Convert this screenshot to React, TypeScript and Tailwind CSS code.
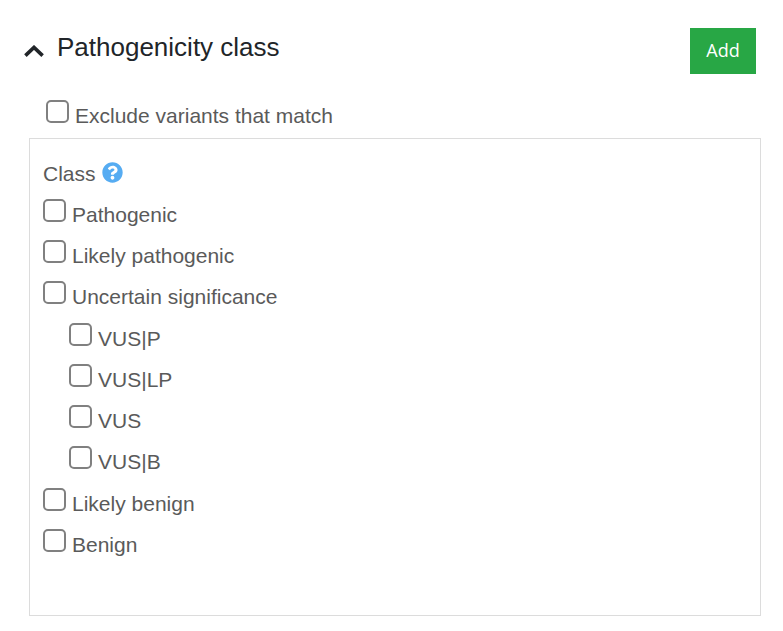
import { useId, useState } from "react";

type Option = { label: string; children?: Option[] };

const OPTIONS: Option[] = [
  { label: "Pathogenic" },
  { label: "Likely pathogenic" },
  {
    label: "Uncertain significance",
    children: [
      { label: "VUS|P" },
      { label: "VUS|LP" },
      { label: "VUS" },
      { label: "VUS|B" },
    ],
  },
  { label: "Likely benign" },
  { label: "Benign" },
];

function Checkbox({ label }: { label: string }) {
  const id = useId();
  return (
    <div className="flex items-start gap-1.5">
      <input
        id={id}
        type="checkbox"
        className="size-[23px] shrink-0 appearance-none rounded-[5px] border-2 border-[#808080] bg-white checked:bg-[#0075ff]"
      />
      <label htmlFor={id} className="pt-1 leading-6">
        {label}
      </label>
    </div>
  );
}

function OptionList({ options, nested }: { options: Option[]; nested?: boolean }) {
  return (
    <ul className={nested ? "py-px pl-[26px]" : ""}>
      {options.map((option) => (
        <li key={option.label}>
          <div className="h-[41px]">
            <Checkbox label={option.label} />
          </div>
          {option.children && <OptionList options={option.children} nested />}
        </li>
      ))}
    </ul>
  );
}

export default function App() {
  const [open, setOpen] = useState(true);
  return (
    <main className="bg-white pt-7 pr-[22px] pb-4 pl-6 font-['Liberation_Sans',Arial,sans-serif] text-[21px] text-[#5a5a5a]">
      <header className="flex items-start justify-between pr-[5px]">
        <h2 className="text-[26px] leading-[38px] text-[#212529]">
          <button
            type="button"
            aria-expanded={open}
            onClick={() => setOpen(!open)}
            className="flex items-center gap-[13px]"
          >
            <svg viewBox="0 0 20 12" className="mt-2 h-3 w-5" fill="none" aria-hidden="true">
              <path d="M1.4 10.6 10 2.4l8.6 8.2" stroke="currentColor" strokeWidth="3.6" />
            </svg>
            <span>Pathogenicity class</span>
          </button>
        </h2>
        <button
          type="button"
          className="h-[46px] min-w-[66px] bg-[#28a745] px-4 pb-0.5 font-['Open_Sans',sans-serif] text-lg text-white"
        >
          Add
        </button>
      </header>

      {open && (
        <>
          <div className="mt-[26px] mb-2.5 pl-[22px]">
            <Checkbox label="Exclude variants that match" />
          </div>
          <fieldset className="ml-[5px] border border-[#dcdcdc] px-[13px] pt-[23px] pb-[45px]">
            <div className="mb-[13px] flex items-start gap-1.5 leading-6">
              <span>Class</span>
              <svg viewBox="0 0 512 512" className="size-[21px]" role="img" aria-label="Help">
                <path
                  fill="#56acf2"
                  d="M504 256c0 136.997-111.043 248-248 248S8 392.997 8 256C8 119.083 119.043 8 256 8s248 111.083 248 248zM262.655 90c-54.497 0-89.255 22.957-116.549 63.758-3.536 5.286-2.353 12.415 2.715 16.258l34.699 26.31c5.205 3.947 12.621 3.008 16.665-2.122 17.864-22.658 30.113-35.797 57.303-35.797 20.429 0 45.698 13.148 45.698 32.958 0 14.976-12.363 22.667-32.534 33.976C247.128 238.528 216 254.941 216 296v4c0 6.627 5.373 12 12 12h56c6.627 0 12-5.373 12-12v-1.333c0-28.462 83.186-29.647 83.186-106.667 0-58.002-60.165-102-116.531-102zM256 338c-25.365 0-46 20.635-46 46 0 25.364 20.635 46 46 46s46-20.636 46-46c0-25.365-20.635-46-46-46z"
                />
              </svg>
            </div>
            <OptionList options={OPTIONS} />
          </fieldset>
        </>
      )}
    </main>
  );
}
